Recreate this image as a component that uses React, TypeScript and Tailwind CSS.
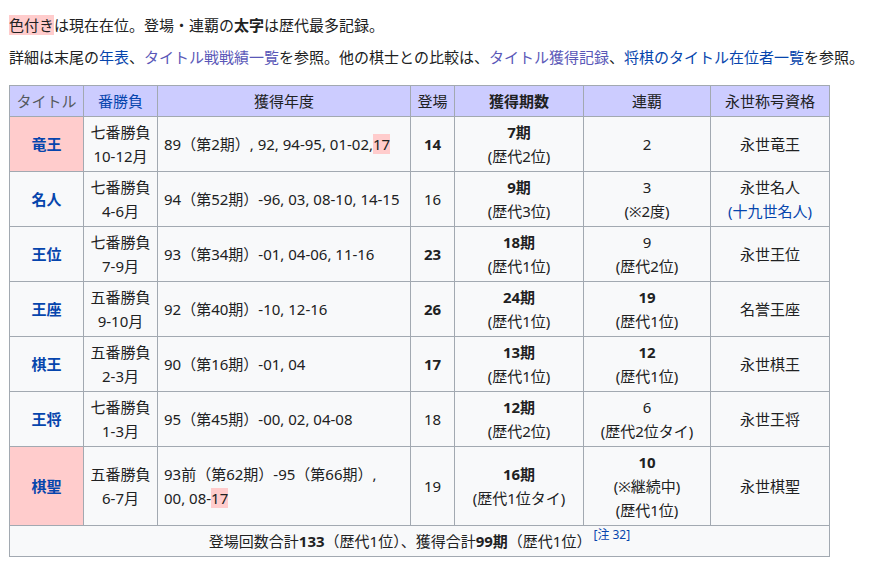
const link = "text-[#0645ad]";
const visited = "text-[#5a58b8]";

const Hl = ({ children }: any) => <span className="bg-[#ffcccc]">{children}</span>;

const rows = [
  {
    title: "竜王", hl: true, kind: "七番勝負", months: "10-12月",
    years: <>89（第2期）, 92, 94-95, 01-02,<Hl>17</Hl></>,
    appear: "14", appearBold: true,
    count: "7期", countRank: "(歴代2位)",
    streak: [{ t: "2" }],
    perm: [{ t: "永世竜王" }],
  },
  {
    title: "名人", kind: "七番勝負", months: "4-6月",
    years: <>94（第52期）-96, 03, 08-10, 14-15</>,
    appear: "16",
    count: "9期", countRank: "(歴代3位)",
    streak: [{ t: "3" }, { t: "(※2度)" }],
    perm: [{ t: "永世名人" }, { t: "(十九世名人)", link: true }],
  },
  {
    title: "王位", kind: "七番勝負", months: "7-9月",
    years: <>93（第34期）-01, 04-06, 11-16</>,
    appear: "23", appearBold: true,
    count: "18期", countRank: "(歴代1位)",
    streak: [{ t: "9" }, { t: "(歴代2位)" }],
    perm: [{ t: "永世王位" }],
  },
  {
    title: "王座", kind: "五番勝負", months: "9-10月",
    years: <>92（第40期）-10, 12-16</>,
    appear: "26", appearBold: true,
    count: "24期", countRank: "(歴代1位)",
    streak: [{ t: "19", b: true }, { t: "(歴代1位)" }],
    perm: [{ t: "名誉王座" }],
  },
  {
    title: "棋王", kind: "五番勝負", months: "2-3月",
    years: <>90（第16期）-01, 04</>,
    appear: "17", appearBold: true,
    count: "13期", countRank: "(歴代1位)",
    streak: [{ t: "12", b: true }, { t: "(歴代1位)" }],
    perm: [{ t: "永世棋王" }],
  },
  {
    title: "王将", kind: "七番勝負", months: "1-3月",
    years: <>95（第45期）-00, 02, 04-08</>,
    appear: "18",
    count: "12期", countRank: "(歴代2位)",
    streak: [{ t: "6" }, { t: "(歴代2位タイ)" }],
    perm: [{ t: "永世王将" }],
  },
  {
    title: "棋聖", hl: true, kind: "五番勝負", months: "6-7月",
    years: <>93前（第62期）-95（第66期）,<br />00, 08-<Hl>17</Hl></>,
    appear: "19",
    count: "16期", countRank: "(歴代1位タイ)",
    streak: [{ t: "10", b: true }, { t: "(※継続中)" }, { t: "(歴代1位)" }],
    perm: [{ t: "永世棋聖" }],
  },
];

const td = "border border-[#a2a9b1] px-[6px] py-[3px] align-middle";

export default function App() {
  return (
    <div className="bg-white min-h-[570px] px-[9px] pt-[13px] text-[15px] leading-[24px] text-[#202122]"
      style={{ fontFamily: '"Noto Sans", "Noto Sans CJK JP", sans-serif' }}>
      <p><Hl>色付き</Hl>は現在在位。登場・連覇の<b>太字</b>は歴代最多記録。</p>
      <p className="mt-[8px] whitespace-nowrap">
        詳細は末尾の<span className={link}>年表</span>、<span className={visited}>タイトル戦戦績一覧</span>を参照。他の棋士との比較は、<span className={visited}>タイトル獲得記録</span>、<span className={link}>将棋のタイトル在位者一覧</span>を参照。
      </p>
      <table className="mt-[16px] w-[820px] table-fixed border-collapse bg-[#f8f9fa]">
        <colgroup>
          <col className="w-[74px]" />
          <col className="w-[74px]" />
          <col className="w-[253px]" />
          <col className="w-[44px]" />
          <col className="w-[129px]" />
          <col className="w-[127px]" />
          <col className="w-[119px]" />
        </colgroup>
        <thead>
          <tr className="bg-[#ccccff] text-center">
            <th className={`${td} font-normal text-[#54595d]`}>タイトル</th>
            <th className={`${td} font-normal ${link}`}>番勝負</th>
            <th className={`${td} font-normal`}>獲得年度</th>
            <th className={`${td} font-normal`}>登場</th>
            <th className={`${td} font-bold`}>獲得期数</th>
            <th className={`${td} font-normal`}>連覇</th>
            <th className={`${td} font-normal`}>永世称号資格</th>
          </tr>
        </thead>
        <tbody>
          {rows.map((r) => (
            <tr key={r.title}>
              <td className={`${td} text-center font-bold ${link} ${r.hl ? "bg-[#ffcccc]" : ""}`}>{r.title}</td>
              <td className={`${td} text-center`}>{r.kind}<br />{r.months}</td>
              <td className={td}>{r.years}</td>
              <td className={`${td} text-center ${r.appearBold ? "font-bold" : ""}`}>{r.appear}</td>
              <td className={`${td} text-center`}>
                <div className="font-bold">{r.count}</div>
                <div>{r.countRank}</div>
              </td>
              <td className={`${td} text-center`}>
                {r.streak.map((s: any, i) => (
                  <div key={i} className={s.b ? "font-bold" : ""}>{s.t}</div>
                ))}
              </td>
              <td className={`${td} text-center`}>
                {r.perm.map((p: any, i) => (
                  <div key={i} className={p.link ? link : ""}>{p.t}</div>
                ))}
              </td>
            </tr>
          ))}
          <tr>
            <td colSpan={7} className={`${td} text-center`}>
              登場回数合計<b>133</b>（歴代1位）、獲得合計<b>99期</b>（歴代1位）
              <sup className={`${link} text-[12px] leading-none ml-[2px] relative -top-[8px]`}>[注 32]</sup>
            </td>
          </tr>
        </tbody>
      </table>
    </div>
  );
}
